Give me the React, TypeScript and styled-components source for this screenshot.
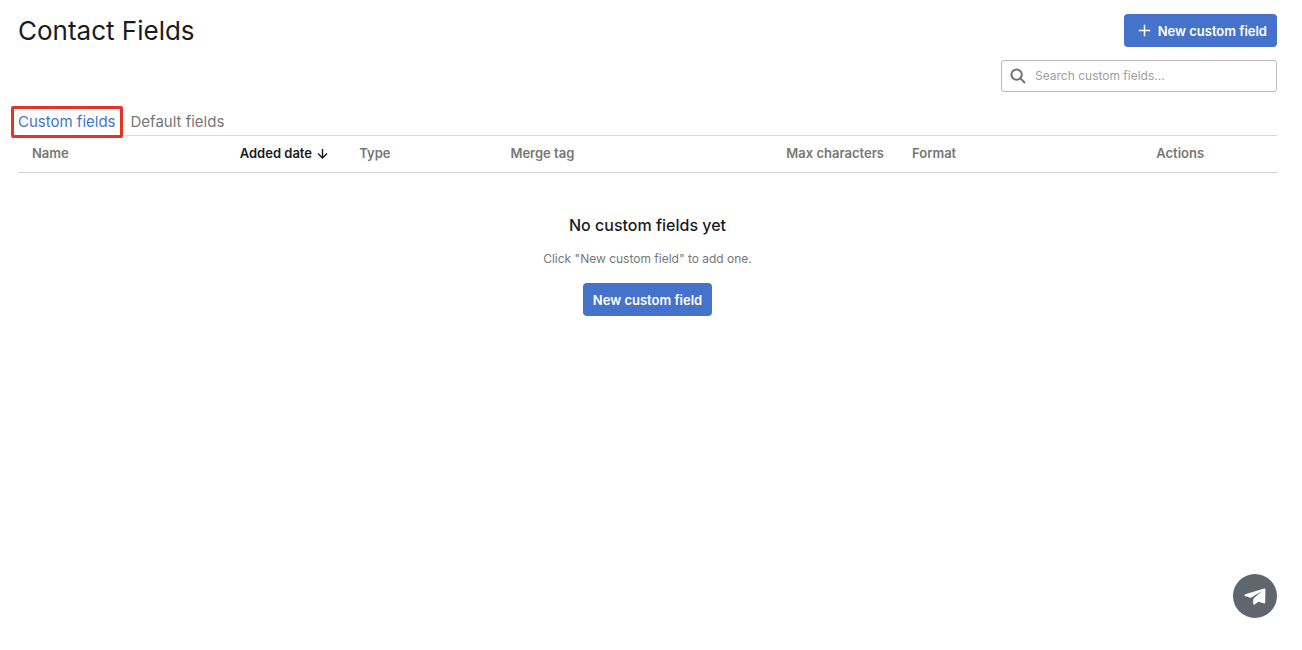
import React from "react";
import styled, { createGlobalStyle } from "styled-components";

const GlobalStyle = createGlobalStyle`
  *, *::before, *::after { box-sizing: border-box; }
  body {
    margin: 0;
    background: #fff;
    color: #1b1b1d;
    font-family: Inter, "Liberation Sans", sans-serif;
    font-size: 13px;
    line-height: 20px;
  }
  button, input { font: inherit; }
`;

const Page = styled.main`
  padding: 14px 25px 0 18px;
`;

const Header = styled.header`
  display: flex;
  justify-content: space-between;
  align-items: center;
`;

const Title = styled.h1`
  margin: 0;
  font-size: 26px;
  line-height: 32px;
  font-weight: 400;
`;

const PrimaryButton = styled.button`
  display: inline-flex;
  align-items: center;
  gap: 7px;
  height: 33px;
  padding: 0 10px;
  border: 0;
  border-radius: 4px;
  background: #4573cb;
  color: #fff;
  font-size: 13px;
  font-weight: 600;
  white-space: nowrap;
  cursor: pointer;

  svg { margin-left: 4px; }
`;

const SearchBox = styled.label`
  display: flex;
  align-items: center;
  gap: 9px;
  width: 276px;
  height: 32px;
  margin: 13px 0 0 auto;
  padding: 0 8px;
  border: 1px solid #b9b9b9;
  border-radius: 3px;
`;

const SearchInput = styled.input`
  flex: 1;
  min-width: 0;
  padding: 0;
  border: 0;
  outline: 0;
  background: transparent;
  color: #1b1b1d;
  font-size: 12px;

  &::placeholder { color: #a0a0a0; opacity: 1; }
`;

const Tabs = styled.nav`
  display: flex;
  gap: 15px;
  margin-top: 14px;
  border-bottom: 1px solid #d9d9d9;
`;

const Tab = styled.a<{ $active?: boolean }>`
  position: relative;
  padding: 6px 0 3px;
  margin-bottom: -1px;
  border-bottom: 1px solid ${(p) => (p.$active ? "#2f4f94" : "transparent")};
  color: ${(p) => (p.$active ? "#4573cb" : "#777")};
  font-size: 15px;
  font-weight: 400;
  text-decoration: none;
`;

const Highlight = styled.span`
  position: absolute;
  inset: 0 -7px -3px;
  border: 3px solid #e5332a;
  border-radius: 2px;
  pointer-events: none;
`;

const Table = styled.table`
  width: 100%;
  table-layout: fixed;
  border-collapse: collapse;
`;

const HeadCell = styled.th<{ $width?: string; $sorted?: boolean; $end?: boolean }>`
  width: ${(p) => p.$width ?? "auto"};
  padding: 7px 14px 9px;
  border-bottom: 1px solid #cfcfcf;
  color: ${(p) => (p.$sorted ? "#1b1b1d" : "#777")};
  font-weight: 600;
  text-align: ${(p) => (p.$end ? "right" : "left")};
  white-space: nowrap;
`;

const SortButton = styled.button`
  display: inline-flex;
  align-items: center;
  gap: 5px;
  padding: 0;
  border: 0;
  background: none;
  color: inherit;
  cursor: pointer;
`;

const EmptyState = styled.section`
  display: flex;
  flex-direction: column;
  align-items: center;
  padding-top: 40px;
`;

const EmptyTitle = styled.h2`
  margin: 0;
  font-size: 16px;
  line-height: 24px;
  font-weight: 500;
`;

const EmptyText = styled.p`
  margin: 12px 0 14px;
  color: #777;
  font-size: 12px;
`;

const ChatButton = styled.button`
  position: fixed;
  right: 25px;
  bottom: 32px;
  display: flex;
  align-items: center;
  justify-content: center;
  width: 44px;
  height: 44px;
  padding: 0;
  border: 0;
  border-radius: 50%;
  background: #60666d;
  cursor: pointer;
`;

export default function App() {
  return (
    <>
      <GlobalStyle />
      <Page>
        <Header>
          <Title>Contact Fields</Title>
          <PrimaryButton type="button">
            <svg width="13" height="13" viewBox="0 0 13 13" fill="none" stroke="#fff" strokeWidth="1.5" aria-hidden="true">
              <path d="M6.5 0.8V12.2M0.8 6.5H12.2" />
            </svg>
            New custom field
          </PrimaryButton>
        </Header>
        <SearchBox>
          <svg width="16" height="16" viewBox="0 0 16 16" fill="none" stroke="#737373" strokeWidth="2" aria-hidden="true">
            <circle cx="6.6" cy="6.6" r="5.2" />
            <path d="M10.4 10.4L15 15" />
          </svg>
          <SearchInput type="text" aria-label="Search custom fields" placeholder="Search custom fields..." />
        </SearchBox>
        <Tabs>
          <Tab href="#custom" $active>
            Custom fields
            <Highlight />
          </Tab>
          <Tab href="#default">Default fields</Tab>
        </Tabs>
        <Table>
          <thead>
            <tr>
              <HeadCell $width="16.5%">Name</HeadCell>
              <HeadCell $width="9.5%" $sorted>
                <SortButton type="button">
                  Added date
                  <svg width="11" height="11" viewBox="0 0 11 11" fill="none" stroke="currentColor" strokeWidth="1.4" aria-hidden="true">
                    <path d="M5.5 1V10M1 5.6L5.5 10L10 5.6" />
                  </svg>
                </SortButton>
              </HeadCell>
              <HeadCell $width="12%">Type</HeadCell>
              <HeadCell $width="21%">Merge tag</HeadCell>
              <HeadCell $width="10.9%" $end>Max characters</HeadCell>
              <HeadCell $width="19.4%">Format</HeadCell>
              <HeadCell>Actions</HeadCell>
            </tr>
          </thead>
        </Table>
        <EmptyState>
          <EmptyTitle>No custom fields yet</EmptyTitle>
          <EmptyText>Click "New custom field" to add one.</EmptyText>
          <PrimaryButton type="button">New custom field</PrimaryButton>
        </EmptyState>
      </Page>
      <ChatButton type="button" aria-label="Send a message">
        <svg width="22" height="17" viewBox="0 0 22 17" fill="#fff" aria-hidden="true">
          <path d="M20.2 0.5Q21.4 0.1 21.4 1.4L21.2 14.2Q21.1 15.8 19.7 15.3L14.4 13.8L10.6 16.4Q9.2 17.2 9.2 15.6V11.8Q9.3 10.6 10.2 9.8L18.2 3L7.4 9.5Q6.4 10 5.5 9.6L1 8Q-0.2 7.2 1.2 6.3Z" />
        </svg>
      </ChatButton>
    </>
  );
}
